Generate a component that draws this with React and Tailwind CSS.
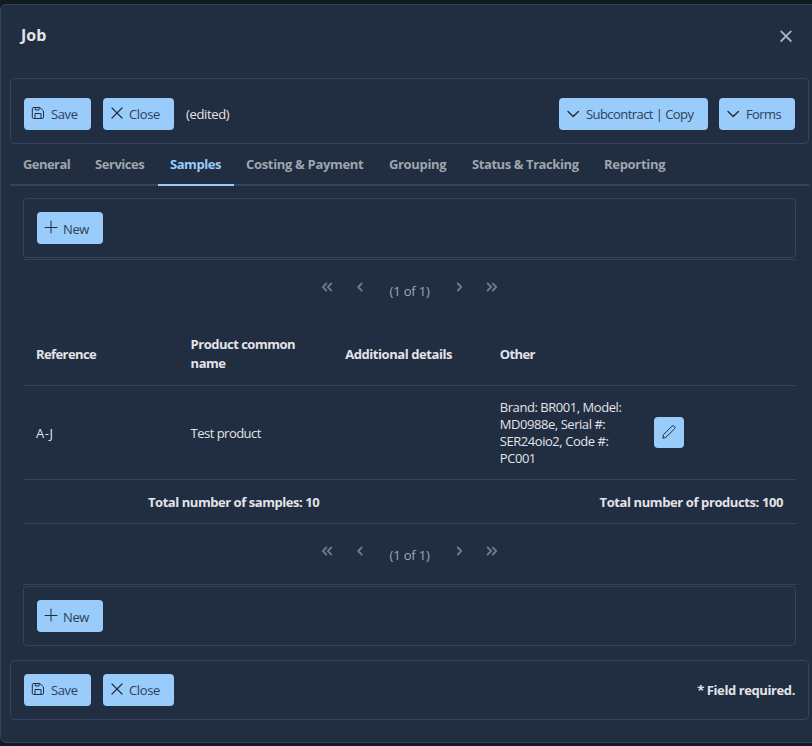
import React from 'react';

const stroke = {
  viewBox: '0 0 14 14',
  fill: 'none',
  stroke: 'currentColor',
  strokeLinecap: 'round',
  strokeLinejoin: 'round',
};

const SaveIcon = () => (
  <svg {...stroke} className="size-[14px] shrink-0">
    <path d="M2.5 1.5h6.3l3.7 3.5v6.3a1.2 1.2 0 0 1-1.2 1.2H2.5a1.2 1.2 0 0 1-1.2-1.2V2.7a1.2 1.2 0 0 1 1.2-1.2zM4 12.4V7.5h6v4.9M4.3 1.7v2.3h3.7V1.7" />
  </svg>
);
const TimesIcon = () => (
  <svg {...stroke} strokeWidth="1.2" className="size-[14px] shrink-0">
    <path d="M2 2l10 10M12 2L2 12" />
  </svg>
);
const PlusIcon = () => (
  <svg {...stroke} className="size-[14px] shrink-0">
    <path d="M7 1v12M1 7.5h12" />
  </svg>
);
const DownIcon = () => (
  <svg {...stroke} strokeWidth="1.4" className="size-[14px] shrink-0">
    <path d="M2 4.4L7.2 9.4l5.2-5" />
  </svg>
);
const PencilIcon = () => (
  <svg {...stroke} className="size-[14px] shrink-0">
    <path d="M0.9 12.8l0.6-3.2L9.9 1.3a1.7 1.7 0 0 1 2.6 2.6L4.2 12z" />
  </svg>
);
const Chevrons = ({ d }) => (
  <svg {...stroke} strokeWidth="1.8" className="size-[14px] shrink-0">
    <path d={d} />
  </svg>
);

const Button = ({ icon, label, className, iconClass = '', labelClass = 'pt-px' }) => (
  <button
    className={`flex h-8 shrink-0 items-center rounded bg-[#99ccfb] pl-[7px] whitespace-nowrap text-[#212d40] ${className}`}
  >
    <span className={iconClass}>{icon}</span>
    <span className={`text-[#2f4055] ${labelClass}`}>{label}</span>
  </button>
);

const SaveButton = () => (
  <Button icon={<SaveIcon />} label="Save" className="w-[67px] gap-[6px] tracking-[-0.4px]" iconClass="pb-0.5" />
);
const CloseButton = () => (
  <Button icon={<TimesIcon />} label="Close" className="w-[71px] gap-[5px] tracking-[-0.35px]" iconClass="pb-0.5" />
);

const tabs = [
  ['General', 'w-[73px] tracking-[-0.55px]'],
  ['Services', 'w-[75px] tracking-[-0.45px]'],
  ['Samples', 'w-[76px] tracking-[-0.45px]'],
  ['Costing & Payment', 'w-[143px] tracking-[-0.32px]'],
  ['Grouping', 'w-[83px] tracking-[-0.35px]'],
  ['Status & Tracking', 'w-[132px] tracking-[-0.42px]'],
  ['Reporting', 'w-[87px] tracking-[-0.3px]'],
];

const Paginator = () => (
  <div className="flex h-[62px] justify-center pt-[20px] text-[#6f7988]">
    <div className="flex w-[180px] items-start">
      <span className="w-[33px]"><Chevrons d="M6.3 3.5L2.8 7l3.5 3.5M11.3 3.5L7.8 7l3.5 3.5" /></span>
      <span className="w-[37px]"><Chevrons d="M8.7 3.5L5.2 7L8.7 10.5" /></span>
      <span className="w-[63px] pt-[2px] leading-[18px] tracking-[-0.15px] whitespace-nowrap text-[#a3a8b0]">(1 of 1)</span>
      <span className="w-[32px]"><Chevrons d="M4.8 3.5L8.3 7l-3.5 3.5" /></span>
      <span><Chevrons d="M2.7 3.5L6.2 7l-3.5 3.5M7.7 3.5L11.2 7l-3.5 3.5" /></span>
    </div>
  </div>
);

const NewBar = () => (
  <div className="flex h-[60px] items-start rounded border border-[#304562] px-[13px] pt-[13px]">
    <Button icon={<PlusIcon />} label="New" className="w-[66px] gap-[5px] tracking-[-0.4px]" iconClass="pb-0.5" labelClass="pt-[3px]" />
  </div>
);

const grid = 'grid grid-cols-5 items-center border-b border-[#304562] [&>*]:px-[13px]';

export default function App() {
  return (
    <div className="h-[746px] w-[812px] overflow-hidden bg-[#131923] pt-1 font-['Open_Sans','Noto_Sans',sans-serif] text-[13px] text-[#e2e4e8]">
      <div className="flex h-[739px] w-[819px] flex-col rounded-md border border-[#304562] bg-[#212d40] pr-[9px] pl-[9px]">
        <header className="flex h-[73px] shrink-0 items-start justify-between pr-[16px] pl-[10px]">
          <h1 className="pt-[18px] pl-px text-base leading-6 font-bold">Job</h1>
          <svg viewBox="0 0 14 14" className="mt-[24px] size-[14px] text-[#b0b4bb]" fill="none" stroke="currentColor" strokeWidth="1.8" strokeLinecap="round">
            <path d="M2.2 2.4l9.6 9.6M11.8 2.4L2.2 12" />
          </svg>
        </header>

        <div className="flex h-[66px] w-[799px] shrink-0 items-center justify-between rounded border border-[#304562] px-[13px] pt-1.5">
          <div className="flex items-center gap-3">
            <SaveButton />
            <CloseButton />
            <span className="pt-px tracking-[-0.35px]">(edited)</span>
          </div>
          <div className="flex gap-[11px]">
            <Button icon={<DownIcon />} label="Subcontract | Copy" className="w-[149px] gap-[6px] tracking-[-0.56px]" />
            <Button icon={<DownIcon />} label="Forms" className="w-[76px] gap-[6px] tracking-[-0.6px]" />
          </div>
        </div>

        <nav className="flex h-[42px] w-[799px] shrink-0 border-b-2 border-[#304562] font-bold text-[#9fa5ae]">
          {tabs.map(([name, cls]) => (
            <div
              key={name}
              className={`flex h-[42px] shrink-0 items-start pt-[11px] leading-[18px] whitespace-nowrap ${name === 'General' ? 'pl-[13px]' : 'pl-3'} ${name === 'Samples' ? 'border-b-2 border-[#99ccfb] text-[#99ccfb]' : ''} ${cls}`}
            >
              {name}
            </div>
          ))}
        </nav>

        <main className="mt-3 ml-[13px] w-[773px] shrink-0">
          <NewBar />
          <div className="mt-px border-t border-[#304562]">
            <Paginator />
            <div className={`${grid} h-[64px] pt-px leading-[19px] font-bold tracking-[-0.5px]`}>
              <div className="tracking-[-0.6px]">Reference</div>
              <div>Product common<br />name</div>
              <div className="tracking-[-0.43px] whitespace-nowrap">Additional details</div>
              <div className="tracking-[-0.6px]">Other</div>
              <div />
            </div>
            <div className={`${grid} h-[94px] leading-[17px] tracking-[-0.45px]`}>
              <div className="pt-0.5 tracking-[0.6px]">A-J</div>
              <div className="pt-0.5 tracking-[-0.52px]">Test product</div>
              <div />
              <div className="whitespace-nowrap">
                Brand: BR001, Model:<br />MD0988e, Serial #:<br />SER24oio2, Code #:<br />PC001
              </div>
              <div>
                <button className="flex h-[31px] w-[30px] items-center justify-center rounded bg-[#99ccfb] pb-px text-[#212d40]">
                  <PencilIcon />
                </button>
              </div>
            </div>
            <div className="flex h-[44px] items-center justify-between border-b border-[#304562] pt-0.5 pr-[13px] pl-[125px] font-bold">
              <span className="tracking-[-0.45px]">Total number of samples: 10</span>
              <span className="tracking-[-0.4px]">Total number of products: 100</span>
            </div>
            <Paginator />
          </div>
          <div className="-mt-[2px] border-t border-[#304562] pt-px">
            <NewBar />
          </div>
        </main>

        <footer className="mt-[14px] flex h-[60px] w-[799px] shrink-0 items-center justify-between rounded border border-[#304562] px-[13px]">
          <div className="flex gap-3">
            <SaveButton />
            <CloseButton />
          </div>
          <span className="pt-0.5 font-bold tracking-[-0.4px]">* Field required.</span>
        </footer>
      </div>
    </div>
  );
}
